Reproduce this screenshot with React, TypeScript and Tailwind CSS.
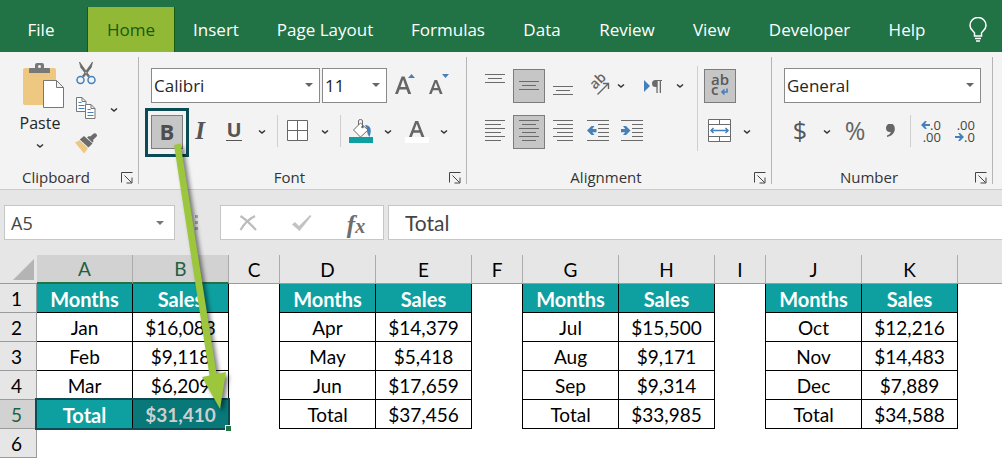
import type { ReactNode } from 'react';

const tabs = [
  { name: 'File', width: 'w-[82px]' },
  { name: 'Home', width: 'w-[88px]' },
  { name: 'Insert', width: 'w-[82px]' },
  { name: 'Page Layout', width: 'w-[136px]' },
  { name: 'Formulas', width: 'w-[110px]' },
  { name: 'Data', width: 'w-[78px]' },
  { name: 'Review', width: 'w-[92px]' },
  { name: 'View', width: 'w-[77px]' },
  { name: 'Developer', width: 'w-[119px]' },
  { name: 'Help', width: 'w-[76px]' },
];

const columns = ['A', 'B', 'C', 'D', 'E', 'F', 'G', 'H', 'I', 'J', 'K'];

const quarters = [
  [['Jan', '$16,083'], ['Feb', '$9,118'], ['Mar', '$6,209'], ['Total', '$31,410']],
  [['Apr', '$14,379'], ['May', '$5,418'], ['Jun', '$17,659'], ['Total', '$37,456']],
  [['Jul', '$15,500'], ['Aug', '$9,171'], ['Sep', '$9,314'], ['Total', '$33,985']],
  [['Oct', '$12,216'], ['Nov', '$14,483'], ['Dec', '$7,889'], ['Total', '$34,588']],
];

function cellText(row: number, col: number) {
  const part = col % 3;
  const quarter = quarters[Math.floor(col / 3)];
  if (part === 2 || row > 5) return '';
  if (row === 1) return part === 0 ? 'Months' : 'Sales';
  return quarter[row - 2][part];
}

function cellStyle(row: number, col: number) {
  const part = col % 3;
  if (row > 5) return '';
  if (part === 2) return 'border-r border-black';
  const base = 'border-r border-b border-black ';
  if (row === 1 || (row === 5 && col === 0)) return base + 'bg-[#0e9fa0] text-[20px] font-bold text-white';
  if (row === 5 && col === 1) return base + 'bg-[#087879] font-bold text-[#cfcfcf]';
  return base;
}

function Chevron() {
  return (
    <svg width="8" height="6" viewBox="0 0 8 6" fill="none" stroke="#333" strokeWidth="1.5">
      <path d="M1 1.500l3 2.600 3-2.600" />
    </svg>
  );
}

function Tool({ label, className, children }: { label: string; className: string; children: ReactNode }) {
  return (
    <button type="button" aria-label={label} className={'flex h-[34px] shrink-0 items-center justify-center ' + className}>
      {children}
    </button>
  );
}

function Drop({ label, className }: { label: string; className: string }) {
  return (
    <Tool label={label} className={'pb-0! ' + className}>
      <Chevron />
    </Tool>
  );
}

function Combo({ label, value, className }: { label: string; value: string; className: string }) {
  return (
    <div className={'relative h-[35px] shrink-0 ' + className}>
      <select aria-label={label} defaultValue={value} className="h-full w-full appearance-none border border-[#8a8a8a] bg-white pl-[2px] text-[17px] text-[#262626]">
        <option>{value}</option>
      </select>
      <svg className="pointer-events-none absolute top-[15px] right-[7px]" width="8" height="4" viewBox="0 0 8 4" fill="#666">
        <path d="M0 0h8L4 4z" />
      </svg>
    </div>
  );
}

function Group({ name, className, children }: { name: string; className: string; children: ReactNode }) {
  return (
    <section aria-label={name} className={'flex shrink-0 flex-col border-r border-[#b5b5b5] ' + className}>
      <div className="flex h-[111px] shrink-0">{children}</div>
      <div className="flex h-[18px] shrink-0">
        <h2 className="flex-1 text-center text-[15px] leading-[18px] text-[#333]">{name}</h2>
        <button type="button" aria-label={name + ' settings'} className="flex w-[26px] items-center justify-center pt-[2px] pl-[3px]">
          <svg width="12" height="12" viewBox="0 0 12 12" fill="none" stroke="#444" strokeWidth="1">
            <path d="M.5 10.500V.5h11M3.500 3.500l7 7M11 5.500V11H5.500" />
          </svg>
        </button>
      </div>
    </section>
  );
}

function Lines({ rows, height = 21 }: { rows: number[][]; height?: number }) {
  return (
    <svg width="20" height={height} viewBox={`0 0 20 ${height}`} fill="#6a6a6a">
      {rows.map(([x, w, y]) => (
        <rect key={y} x={x} y={y} width={w} height="1" />
      ))}
    </svg>
  );
}

function Separator({ className }: { className: string }) {
  return <div className={'w-px shrink-0 bg-[#cfcfcf] ' + className} />;
}

export default function App() {
  return (
    <main className="relative min-h-[458px] overflow-hidden bg-white font-['Open_Sans','Noto_Sans',sans-serif]">
      <nav aria-label="Ribbon tabs" className="flex h-[52px] items-end bg-[#217346]">
        {tabs.map((tab) =>
          tab.name === 'Home' ? (
            <a key={tab.name} href="#home" aria-current="page" className={'ml-[5px] flex h-[45px] shrink-0 items-center justify-center border-x border-[#175a12] bg-[#92b936] text-[17px] text-[#175a12] ' + tab.width}>
              {tab.name}
            </a>
          ) : (
            <a key={tab.name} href={'#' + tab.name.toLowerCase().replace(' ', '-')} className={'flex h-[45px] shrink-0 items-center justify-center text-[17px] text-white ' + tab.width}>
              {tab.name}
            </a>
          ),
        )}
        <button type="button" aria-label="Tell me what you want to do" className="ml-[24px] flex h-[45px] shrink-0 items-center">
          <svg width="18" height="25" viewBox="0 0 18 25" fill="none" stroke="#fff" strokeWidth="1.500">
            <path d="M5.500 19v-3C4.500 14 1 12.500 1 8.500a8 8 0 0 1 16 0c0 4-3.500 5.500-4.500 7.500v3zM6 21.500h6M7 24h4" />
          </svg>
        </button>
      </nav>

      <div className="flex h-[138px] border-b border-[#cbcbcb] bg-[#f3f3f3] py-[5px]">
        <Group name="Clipboard" className="w-[139px]">
          <button type="button" className="ml-[11px] flex w-[58px] flex-col items-center pt-[6px] text-[16px] leading-[28px] text-[#262626]">
            <svg className="ml-[7px] shrink-0" width="42" height="46" viewBox="0 0 42 46">
              <path d="M0 7q0-2 2-2h29q2 0 2 2v33q0 2-2 2H2q-2 0-2-2z" fill="#eec781" />
              <path d="M6 10V6q0-1 1-1h5V2q0-2 2-2h5q2 0 2 2v3h5q1 0 1 1v4z" fill="#787878" />
              <circle cx="16.500" cy="3.500" r="1.500" fill="#f3f3f3" />
              <path d="M20.500 17.500h13l7 7v20h-20zM33.500 17.500v7h7" fill="#fff" stroke="#777" />
            </svg>
            Paste
            <span className="mt-[6px]"><Chevron /></span>
          </button>
          <div className="ml-px flex w-8 flex-col">
            <button type="button" aria-label="Cut" className="flex h-[33px] items-center justify-center">
              <svg width="20" height="23" viewBox="0 0 20 23" fill="none">
                <path d="M3.500 0l1.300 5.500 7.400 9.500 1.300-1zM16.500 0l-1.300 5.500L7.800 15l-1.300-1z" fill="#6b6b6b" stroke="#6b6b6b" strokeWidth=".8" />
                <circle cx="4.500" cy="18" r="3.500" stroke="#4480bb" strokeWidth="1.500" />
                <circle cx="15.500" cy="18" r="3.500" stroke="#4480bb" strokeWidth="1.500" />
              </svg>
            </button>
            <button type="button" aria-label="Copy" className="flex h-[37px] items-center justify-center">
              <svg width="20" height="23" viewBox="0 0 20 23" fill="none">
                <path d="M.5.500H6l4 4v10H.5zM6 .5v4h4" fill="#fff" stroke="#777" />
                <path d="M2.500 5.500h3M2.500 8.500h6M2.500 11.500h6" stroke="#4480bb" />
                <path d="M9.500 7.500H15l4 4v10H9.500zM15 7.500v4h4" fill="#fff" stroke="#777" />
                <path d="M11.500 12.500h3M11.500 15.500h6M11.500 18.500h6" stroke="#4480bb" />
              </svg>
            </button>
            <button type="button" aria-label="Format painter" className="flex h-[33px] items-center justify-center">
              <svg width="22" height="21" viewBox="0 0 22 21">
                <path d="M0 9.500l4.500-2.300 8.500 8L9 20.500z" fill="#eec781" />
                <path d="M4.800 6.500L9 3l8.500 7.500-4 4z" fill="#6b6b6b" />
                <path d="M12 4.500l2-1.500 1.200.5L18.800.5q1.500-.8 2.600.5t.2 2.600L18 7l.5 1.500-1.700 1.500z" fill="#6b6b6b" />
                <path d="M10.500 3.500l7 6.500" stroke="#f3f3f3" strokeWidth=".8" />
              </svg>
            </button>
          </div>
          <div className="flex h-[105px] items-center pl-[7px]">
            <Drop label="Copy options" className="w-[10px]" />
          </div>
        </Group>

        <Group name="Font" className="w-[328px]">
          <div className="flex flex-col pt-[11px] pl-[12px]">
            <div className="flex">
              <Combo label="Font name" value="Calibri" className="w-[169px]" />
              <Combo label="Font size" value="11" className="ml-[2px] w-[65px]" />
              <Tool label="Increase font size" className="w-9">
                <svg width="20" height="22" viewBox="0 0 20 22" fill="#666">
                  <path fillRule="evenodd" d="M0 20L6.600 2.500h3L16.200 20h-3l-1.700-4.600H4.600L2.900 20zM5.500 12.900h5.100L8.100 5.600z" />
                  <path d="M13 4l3.500-4L20 4z" fill="#4480bb" />
                </svg>
              </Tool>
              <Tool label="Decrease font size" className="w-8">
                <svg width="20" height="22" viewBox="0 0 20 22" fill="#666">
                  <path fillRule="evenodd" d="M0 20L5.500 6h2.600l5.500 14h-2.700l-1.400-3.800H4L2.600 20zM4.800 13.900h4L6.800 8.500z" />
                  <path d="M13 0h7l-3.500 4z" fill="#4480bb" />
                </svg>
              </Tool>
            </div>
            <div className="mt-[12px] flex [&_button]:pb-[3px]">
              <div className="relative">
                <Tool label="Bold" className="w-8 border border-[#7d7d7d] bg-[#c6c6c6] text-[22px] leading-[26px] font-bold text-[#4d4d4d]">B</Tool>
                <div className="pointer-events-none absolute -inset-x-[6px] -top-[7px] -bottom-[8px] border-[3px] border-[#0a4c56]" />
              </div>
              <Tool label="Italic" className="w-[34px] font-['Liberation_Serif',serif] text-[25px] font-bold text-[#555] italic">I</Tool>
              <Tool label="Underline" className="w-[34px]">
                <span className="border-b border-[#555] text-[20px] leading-[20px] font-bold text-[#555]">U</span>
              </Tool>
              <Drop label="Underline options" className="w-[22px]" />
              <Separator className="ml-[4px] h-[32px]" />
              <Tool label="Borders" className="w-[39px]">
                <svg width="21" height="21" viewBox="0 0 21 21" fill="#fff" stroke="#666">
                  <path d="M.5.500h20v20H.5zM10.500.500v20M.5 10.500h20" />
                </svg>
              </Tool>
              <Drop label="Border options" className="w-4" />
              <Separator className="ml-[7px] h-[32px]" />
              <Tool label="Fill color" className="w-10">
                <svg width="24" height="25" viewBox="0 -1 24 25" fill="none">
                  <path d="M16 6c6 0 7 5 4.500 12-2-2-2.500-5-2.500-8z" fill="#4480bb" />
                  <path d="M4.500 11l7-7 7.500 7-7.500 7z" fill="#fff" stroke="#6b6b6b" />
                  <path d="M9.500 6V2q0-1.500 2-1.500t2 1.500v6" stroke="#6b6b6b" />
                  <circle cx="13.500" cy="8" r="1.300" fill="#6b6b6b" />
                  <path d="M0 18h24v6H0z" fill="#0e9fa0" />
                </svg>
              </Tool>
              <Drop label="Fill color options" className="w-[14px]" />
              <Tool label="Font color" className="w-11">
                <svg width="24" height="25" viewBox="0 -1 24 25" fill="#666">
                  <path fillRule="evenodd" d="M4 18L10.200 2h3L19.400 18h-2.900l-1.600-4.300H8.400L6.800 18zM9.300 11.300h4.800l-2.400-6.600z" />
                  <path d="M0 18h24v6H0z" fill="#fff" />
                </svg>
              </Tool>
              <Drop label="Font color options" className="w-[10px]" />
            </div>
          </div>
        </Group>

        <Group name="Alignment" className="w-[305px]">
          <div className="flex w-[230px] flex-col pt-[12px] pl-[10px]">
            <div className="flex">
              <Tool label="Top align" className="w-9"><Lines height={26} rows={[[0, 20, 1], [3, 14, 5], [0, 20, 9]]} /></Tool>
              <Tool label="Middle align" className="w-8 border border-[#7d7d7d] bg-[#c6c6c6]"><Lines height={10} rows={[[0, 20, 0], [3, 14, 4], [0, 20, 8]]} /></Tool>
              <Tool label="Bottom align" className="w-9"><Lines height={26} rows={[[0, 20, 13], [3, 14, 17], [0, 20, 21]]} /></Tool>
              <Tool label="Orientation" className="w-9">
                <svg className="overflow-visible" width="21" height="20" viewBox="0 0 21 20" fill="none">
                  <text transform="translate(6 14) rotate(-45)" fontSize="14" fontWeight="600" fill="#666">ab</text>
                  <path d="M8.500 18.500L19 8M14 7.500h5.500V13" stroke="#666" strokeWidth="1.400" />
                </svg>
              </Tool>
              <Drop label="Orientation options" className="w-2" />
              <Tool label="Text direction" className="w-[51px] pl-[5px]">
                <svg width="20" height="14" viewBox="0 0 20 14">
                  <path d="M1 1l6 6-6 6z" fill="#4480bb" />
                  <path d="M12.500 8a3.500 3.500 0 0 1 0-7H19v1h-1v12h-1.300V2h-2v12h-1.300V8z" fill="#6b6b6b" />
                </svg>
              </Tool>
              <Drop label="Text direction options" className="w-2" />
            </div>
            <div className="mt-[12px] flex [&_button]:pb-[3px]">
              <Tool label="Align left" className="w-9"><Lines rows={[[0, 20, 0], [0, 16, 4], [0, 20, 8], [0, 16, 12], [0, 20, 16], [0, 16, 20]]} /></Tool>
              <Tool label="Center" className="w-8 border border-[#7d7d7d] bg-[#c6c6c6]"><Lines rows={[[0, 20, 0], [3, 14, 4], [0, 20, 8], [3, 14, 12], [0, 20, 16], [3, 14, 20]]} /></Tool>
              <Tool label="Align right" className="w-9"><Lines rows={[[0, 20, 0], [4, 16, 4], [0, 20, 8], [4, 16, 12], [0, 20, 16], [4, 16, 20]]} /></Tool>
              <Tool label="Decrease indent" className="w-[34px]">
                <svg width="22" height="21" viewBox="0 0 22 21">
                  <path d="M0 .5h22M11 4.500h11M11 8.500h11M11 12.500h11M11 16.500h11M0 20.500h22" stroke="#6a6a6a" />
                  <path d="M0 10.500L4.500 6h3L5.300 9H9.500v3.200H5.300l2.200 2.900h-3z" fill="#4480bb" />
                </svg>
              </Tool>
              <Tool label="Increase indent" className="w-[34px]">
                <svg width="22" height="21" viewBox="0 0 22 21">
                  <path d="M0 .5h22M11 4.500h11M11 8.500h11M11 12.500h11M11 16.500h11M0 20.500h22" stroke="#6a6a6a" />
                  <path d="M9.500 10.500L5 6H2l2.200 3H0v3.200h4.200L2 15.100h3z" fill="#4480bb" />
                </svg>
              </Tool>
            </div>
          </div>
          <Separator className="mt-[9px] h-[85px]" />
          <div className="flex flex-col pt-[12px] pl-[6px]">
            <button type="button" aria-label="Wrap text" className="flex h-[34px] w-8 items-center justify-center border border-[#7d7d7d] bg-[#c6c6c6]">
              <svg className="overflow-visible" width="20" height="26" viewBox="0 0 20 26" fill="none">
                <text x="1" y="12" fontSize="15" fontWeight="600" fill="#5a5a5a">ab</text>
                <text x="1" y="22" fontSize="15" fontWeight="600" fill="#5a5a5a">c</text>
                <path d="M17 15.500v3.500h-5M14.500 16.500L12 19l2.500 2.500" stroke="#4480bb" strokeWidth="1.600" />
              </svg>
            </button>
            <div className="mt-[12px] flex [&_button]:pb-[3px]">
              <Tool label="Merge and center" className="w-[31px]">
                <svg width="23" height="23" viewBox="0 0 23 23" fill="none">
                  <path d="M.5.500h22v22H.5z" fill="#fff" stroke="#6b6b6b" />
                  <path d="M.5 5.500h22M.5 17.500h22M11.500 .5v5M11.500 17.500v5" stroke="#6b6b6b" />
                  <path d="M3 11.500h17M5.500 9L3 11.500 5.500 14M17.500 9l2.500 2.500-2.500 2.500" stroke="#4480bb" strokeWidth="1.500" />
                </svg>
              </Tool>
              <Drop label="Merge options" className="w-6" />
            </div>
          </div>
        </Group>

        <Group name="Number" className="w-[221px]">
          <div className="flex flex-col pt-[11px] pl-[12px]">
            <Combo label="Number format" value="General" className="w-[197px]" />
            <div className="mt-[12px] flex [&_button]:pb-[3px]">
              <Tool label="Currency" className="w-8 text-[25px] text-[#555]">$</Tool>
              <Drop label="Currency options" className="w-[22px]" />
              <Tool label="Percent style" className="w-[34px] text-[25px] text-[#666]">%</Tool>
              <Tool label="Comma style" className="w-9">
                <svg width="9" height="13" viewBox="0 0 9 13" fill="#666">
                  <path d="M0 4a4 4 0 0 1 8.700-.3C9.500 8 6 12 1 13v-1.500c2.500-1 3.500-2 3.700-3.600C2 8.500 0 7 0 4z" />
                </svg>
              </Tool>
              <Separator className="ml-[2px] h-[32px]" />
              <Tool label="Increase decimal" className="w-10">
                <span className="grid text-right text-[13px] leading-[12px] text-[#444]">
                  <span className="flex items-center justify-end">
                    <svg width="9" height="8" viewBox="0 0 9 8" fill="#4480bb"><path d="M0 4l4-4h1.800L4 3h5v2H4l1.800 3H4z" /></svg>.0
                  </span>
                  <span>.00</span>
                </span>
              </Tool>
              <Tool label="Decrease decimal" className="w-7">
                <span className="grid text-right text-[13px] leading-[12px] text-[#444]">
                  <span>.00</span>
                  <span className="flex items-center justify-end">
                    <svg width="9" height="8" viewBox="0 0 9 8" fill="#4480bb"><path d="M9 4L5 0H3.200L5 3H0v2h5L3.200 8H5z" /></svg>.0
                  </span>
                </span>
              </Tool>
            </div>
          </div>
        </Group>
      </div>

      <div className="flex h-[65px] items-center bg-[#e6e6e6] pl-[4px]">
        <div className="flex h-[35px] w-[171px] shrink-0 items-center border border-[#c6c6c6] bg-white">
          <input aria-label="Name box" defaultValue="A5" className="h-full min-w-0 flex-1 pl-[6px] text-[18px] text-[#444]" />
          <button type="button" aria-label="Named ranges" className="flex h-full w-[28px] items-center justify-center">
            <svg width="8" height="4" viewBox="0 0 8 4" fill="#777"><path d="M0 0h8L4 4z" /></svg>
          </button>
        </div>
        <svg className="mx-[20px] shrink-0" width="3" height="15" viewBox="0 0 3 15" fill="#a3a3a3">
          <path d="M0 0h3v3H0zM0 6h3v3H0zM0 12h3v3H0z" />
        </svg>
        <div className="ml-[2px] flex h-[35px] w-[164px] shrink-0 items-center border border-[#c6c6c6] bg-white">
          <button type="button" aria-label="Cancel" className="flex h-full w-[54px] items-center justify-center">
            <svg width="18" height="16" viewBox="0 0 18 16" fill="none" stroke="#bcbcbc" strokeWidth="2.200"><path d="M1.500 1C6 4 12 9.500 17 15M16 1C10 4 5 9 1.500 15" /></svg>
          </button>
          <button type="button" aria-label="Enter" className="flex h-full w-[54px] items-center justify-center">
            <svg width="20" height="16" viewBox="0 0 20 16" fill="#c3c3c3"><path d="M0 9.500L3 7l4 4L18 0l1.500 1L7.500 16z" /></svg>
          </button>
          <button type="button" aria-label="Insert function" className="h-full w-[54px] pb-[4px] font-['Liberation_Serif',serif] font-bold text-[#6e6e6e] italic">
            <span className="text-[25px]">f</span><span className="text-[20px]">x</span>
          </button>
        </div>
        <input aria-label="Formula bar" defaultValue="Total" className="ml-[4px] h-[35px] min-w-0 flex-1 border border-r-0 border-[#c6c6c6] bg-white pl-[16px] font-['Lato',sans-serif] text-[21px] text-[#444]" />
      </div>

      <div className="relative">
        <table className="w-full table-fixed border-separate border-spacing-0 font-['Lato',sans-serif] text-[19px] leading-[26px] text-black">
          <colgroup>
            <col className="w-[37px]" />
            {columns.map((name, i) => (
              <col key={name} className={i % 3 === 2 ? 'w-[51px]' : 'w-[96px]'} />
            ))}
            <col />
          </colgroup>
          <thead>
            <tr className="h-[29px]">
              <td className="border-b border-[#9b9b9b] bg-[#e6e6e6] p-0">
                <svg className="mr-[3px] ml-auto" width="21" height="21" viewBox="0 0 21 21" fill="#b4b4b4"><path d="M21 0v21H0z" /></svg>
              </td>
              {columns.map((name, i) => (
                <th
                  key={name}
                  scope="col"
                  className={
                    'border-r border-r-[#ababab] p-0 font-normal ' +
                    (i < 2 ? 'border-b-2 border-b-[#217346] bg-[#d2d2d2] pt-px text-[#1f6140]' : 'border-b border-b-[#9b9b9b] bg-[#e6e6e6] pt-[2px]')
                  }
                >
                  {name}
                </th>
              ))}
              <td className="border-b border-[#9b9b9b] bg-[#e6e6e6] p-0" />
            </tr>
          </thead>
          <tbody>
            {[1, 2, 3, 4, 5, 6].map((row) => (
              <tr key={row} className="h-[29px]">
                <th
                  scope="row"
                  className={
                    'border-r border-b border-[#9b9b9b] p-0 pt-[2px] pr-[3px] font-normal ' +
                    (row === 5 ? 'bg-[#d2d2d2] text-[#1f6140]' : 'bg-[#e6e6e6]')
                  }
                >
                  {row}
                </th>
                {columns.map((name, col) => (
                  <td key={name} className={'p-0 pt-[2px] text-center ' + cellStyle(row, col)}>
                    {cellText(row, col)}
                  </td>
                ))}
                <td className="p-0" />
              </tr>
            ))}
          </tbody>
        </table>
        <div className="pointer-events-none absolute top-[143px] left-[35px] h-[32px] w-[195px] border-2 border-[#0d4b54]">
          <div className="absolute -right-[3px] -bottom-[3px] size-[6px] border-t border-l border-white bg-[#217346]" />
        </div>
      </div>

      <svg className="pointer-events-none absolute top-[140px] left-[165px]" width="75" height="280" viewBox="0 0 75 280">
        <path d="M9 5l6.500-1.500L51.500 234l9.500-2-6 37-18-32 7.500-1.500z" fill="#9cc63c" className="drop-shadow-[3px_3px_2px_rgba(0,0,0,0.5)]" />
      </svg>
    </main>
  );
}
